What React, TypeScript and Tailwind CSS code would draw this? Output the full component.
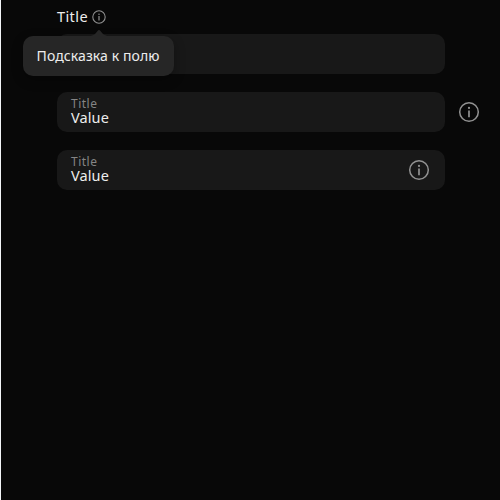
import React from 'react';

function InfoIcon({ className, stroke }: { className: string; stroke: number }) {
  return (
    <svg viewBox="0 0 24 24" fill="none" className={className}>
      <circle cx="12" cy="12" r="9.3" stroke="currentColor" strokeWidth={stroke} />
      <path d="M12 10.6V17.2" stroke="currentColor" strokeWidth={stroke + 0.2} />
      <circle cx="12" cy="7.9" r="1.1" fill="currentColor" />
    </svg>
  );
}

function Field({ inner }: { inner?: boolean }) {
  return (
    <div className="flex h-10 w-[388px] items-center justify-between rounded-[10px] bg-[#181818] pl-3.5 pr-3.5">
      <div className="flex flex-col">
        <span className="h-3 text-[12px] leading-[12px] tracking-[0.5px] text-[#858585]">Title</span>
        <span className="h-4 text-[14.5px] leading-[14px] tracking-[0.1px] text-[#ededed]">Value</span>
      </div>
      {inner && <InfoIcon className="size-6 text-[#929292]" stroke={1.5} />}
    </div>
  );
}

export default function App() {
  return (
    <div className="h-[500px] w-[500px] overflow-hidden border-l border-[#f2f5f7] bg-[#080808] pl-14 pt-2 font-['Noto_Sans',sans-serif]">
      <div className="flex h-[18px] items-center gap-[2px]">
        <span className="h-[18px] w-8 text-[14.5px] leading-[16px] tracking-[0.4px] text-[#ededed]">Title</span>
        <div className="relative size-4">
          <InfoIcon className="size-4 text-[#929292]" stroke={1.6} />
          <div className="absolute left-[-68px] top-[27px] flex h-10 w-[151px] items-center rounded-[10px] bg-[#262626] pl-[13.6px] shadow-[0_4px_12px_rgba(0,0,0,0.3)]">
            <svg viewBox="0 0 20 7" className="absolute left-[66px] top-[-6px] h-[7px] w-5 text-[#262626]">
              <path d="M0 7V6C5 6 6.5 3.5 8.5 1Q10-.8 11.5 1C13.5 3.5 15 6 20 6V7Z" fill="currentColor" />
            </svg>
            <span className="whitespace-nowrap text-sm leading-[18px] tracking-[0.09px] text-[#ededed]">Подсказка к полю</span>
          </div>
        </div>
      </div>
      <div className="mt-2 h-10 w-[388px] rounded-[10px] bg-[#181818]" />
      <div className="mt-[18px] flex items-center gap-3">
        <Field />
        <InfoIcon className="size-6 text-[#929292]" stroke={1.5} />
      </div>
      <div className="mt-[18px]">
        <Field inner />
      </div>
    </div>
  );
}
